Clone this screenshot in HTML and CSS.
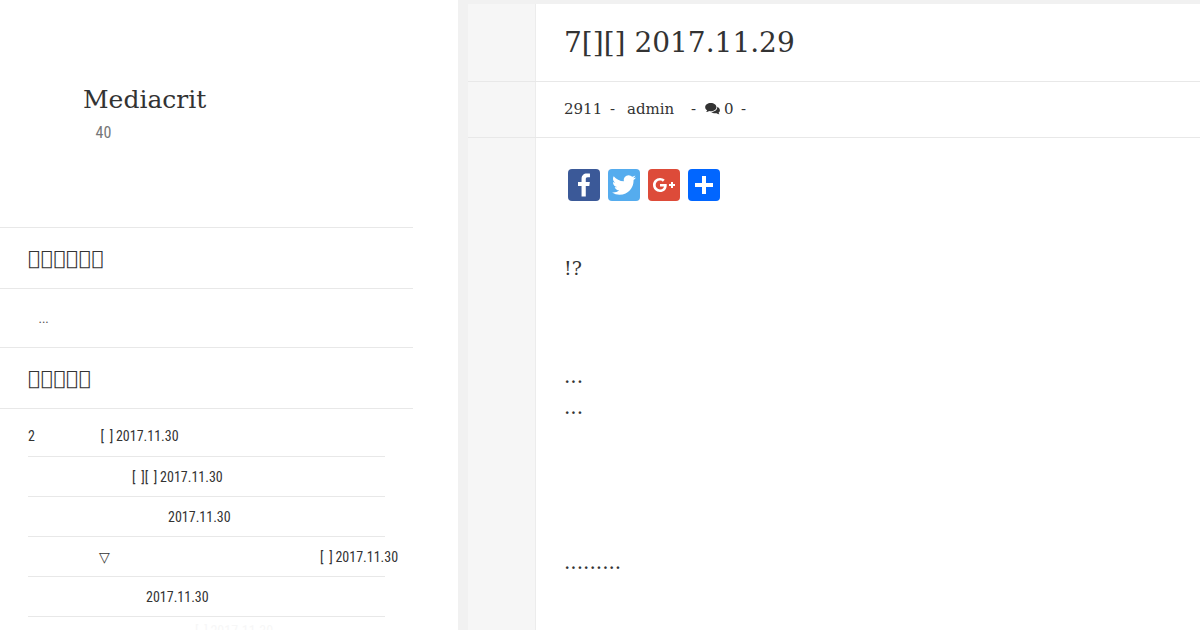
FILE: index.html
```html
<!DOCTYPE html>
<html lang="en">
<head>
  <meta charset="UTF-8">
  <meta name="viewport" content="width=device-width, initial-scale=1">
  <title>Mediacrit</title>
  <link rel="stylesheet" href="styles.css">
</head>
<body>
  <div class="page">
    <!-- Sidebar -->
    <aside class="sidebar">
      <header class="site-header">
        <h1 class="site-title">Mediacrit</h1>
        <p class="site-description"><span class="cond">40</span></p>
      </header>
      <h2 class="widget-title">&#xE800;&#xE800;&#xE800;&#xE800;&#xE800;&#xE800;</h2>
      <div class="widget-text"><span class="cond">...</span></div>
      <h2 class="widget-title">&#xE800;&#xE800;&#xE800;&#xE800;&#xE800;</h2>
      <ul class="recent-posts">
        <li class="post-1"><span class="cond lead">2</span><span class="cond">[&nbsp; ] 2017.11.30</span></li>
        <li class="post-2"><span class="cond">[&nbsp; ][&nbsp; ] 2017.11.30</span></li>
        <li class="post-3"><span class="cond">2017.11.30</span></li>
        <li class="post-4"><span class="triangle">▽</span><span class="cond">[&nbsp; ] 2017.11.30</span></li>
        <li class="post-5"><span class="cond">2017.11.30</span></li>
        <li class="post-6"><span class="cond">[&nbsp; ] 2017.11.30</span></li>
      </ul>
    </aside>

    <!-- Article -->
    <main class="content">
      <div class="row title-row">
        <div class="gutter"></div>
        <h2 class="entry-title">7[][] 2017.11.29</h2>
      </div>
      <div class="row meta-row">
        <div class="gutter"></div>
        <div class="entry-meta">
          <span class="date">2911</span>
          <span class="dash">-</span>
          <span class="author">admin</span>
          <span class="dash">-</span>
          <svg class="comments" width="16" height="14" viewBox="0 0 16 14">
            <path d="M6.2 0.6C2.8 0.6 0.2 2.5 0.2 5c0 1.4.8 2.6 2.1 3.4-.2.8-.7 1.3-1.2 1.8 1.300 0 2.500-.4 3.400-1.100.500.1 1.100.2 1.700.2 3.400 0 6-1.900 6-4.300S9.600.6 6.200.6z"/>
            <path d="M13.100 4.500c.3 3.100-2.600 5.500-6.500 5.700 1 .9 2.500 1.400 4.200 1.400.5 0 1 0 1.500-.1.900.7 2 1.100 3.200 1.100-.5-.5-.9-1-1.100-1.700 1-.7 1.500-1.600 1.500-2.700 0-1.500-1.100-2.900-2.800-3.700z"/>
          </svg>
          <span class="count">0</span>
          <span class="dash">-</span>
        </div>
      </div>
      <div class="row body-row">
        <div class="gutter"></div>
        <div class="entry-content">
          <div class="share">
            <svg class="facebook" viewBox="0 0 32 32"><path fill="#fff" d="M17.780 27.500V17.008h3.522l.527-4.090h-4.050v-2.610c0-1.182.330-1.990 2.023-1.990h2.166V4.660c-.375-.050-1.660-.160-3.155-.160-3.123 0-5.260 1.905-5.260 5.405v3.016h-3.530v4.090h3.530V27.500h4.223z"/></svg>
            <svg class="twitter" viewBox="0 0 32 32"><path fill="#fff" d="M28 8.557a9.913 9.913 0 0 1-2.828.775 4.930 4.930 0 0 0 2.166-2.725 9.738 9.738 0 0 1-3.130 1.194 4.920 4.920 0 0 0-3.593-1.550 4.924 4.924 0 0 0-4.794 6.049c-4.090-.210-7.720-2.170-10.150-5.150a4.942 4.942 0 0 0-.665 2.477c0 1.710.870 3.214 2.190 4.100a4.968 4.968 0 0 1-2.230-.616v.060c0 2.390 1.700 4.380 3.952 4.830-.414.115-.850.174-1.297.174-.318 0-.626-.030-.928-.086a4.935 4.935 0 0 0 4.600 3.420 9.893 9.893 0 0 1-6.114 2.107c-.398 0-.790-.023-1.175-.068a13.953 13.953 0 0 0 7.550 2.213c9.056 0 14.010-7.507 14.010-14.013 0-.213-.005-.426-.015-.637.960-.695 1.795-1.560 2.455-2.550z"/></svg>
            <svg class="gplus" viewBox="0 0 32 32"><path fill="#fff" d="M27 15h-2v-2h-2v2h-2v2h2v2h2v-2h2m-15-2v2.400h3.970c-.160 1.030-1.200 3.020-3.970 3.020-2.390 0-4.340-1.980-4.340-4.420s1.950-4.420 4.340-4.420c1.360 0 2.270.580 2.790 1.080l1.900-1.830C15.470 9.690 13.890 9 12 9c-3.870 0-7 3.130-7 7s3.130 7 7 7c4.040 0 6.720-2.840 6.720-6.840 0-.460-.050-.810-.110-1.160H12z"/></svg>
            <svg class="more" viewBox="0 0 32 32"><path fill="#fff" d="M14 7h4v18h-4z"/><path fill="#fff" d="M7 14h18v4H7z"/></svg>
          </div>
          <p class="question">!?</p>
          <p class="dots">...<br>...</p>
          <p class="ending">.........</p>
        </div>
      </div>
    </main>
  </div>
</body>
</html>
```
FILE: styles.css
```css
* {
  box-sizing: border-box;
}

body {
  margin: 0;
  background-color: #f1f1f1;
  color: #333;
  font-family: "DejaVu Serif", serif;
}

h1, h2, p, ul {
  margin: 0;
  padding: 0;
  font-weight: 400;
}

.page {
  display: flex;
  height: 630px;
  overflow: hidden;
}

/* Sidebar */
.sidebar {
  width: 458px;
  margin-right: 10px;
  padding-right: 45px;
  background-color: #fff;
}

.cond {
  font-family: "Roboto Condensed", Roboto, sans-serif;
  font-stretch: 75%;
  white-space: pre;
}

.site-header {
  height: 227px;
  padding: 84px 0 0 83px;
}

.site-title {
  font-size: 25px;
  line-height: 32px;
}

.site-description {
  padding: 7px 0 0 12.5px;
  color: #777;
  font-size: 16px;
  line-height: 20px;
}

.widget-title {
  height: 62px;
  padding-left: 28px;
  border-top: 1px solid #e8e8e8;
  border-bottom: 1px solid #e8e8e8;
  font-family: "DejaVu Sans", sans-serif;
  font-size: 20px;
  letter-spacing: 0.7px;
  line-height: 60px;
}

.widget-text {
  height: 58px;
  padding-left: 38.5px;
  color: #555;
  font-size: 13px;
  line-height: 60px;
}

.recent-posts {
  margin: 8px 0 0 28px;
  list-style: none;
  font-size: 14px;
}

.recent-posts li {
  display: flex;
  width: 357px;
  height: 40px;
  border-bottom: 1px solid #e8e8e8;
  line-height: 40px;
  white-space: nowrap;
}

.recent-posts .cond {
  flex-shrink: 0;
  word-spacing: -0.4px;
}

.recent-posts .post-1 {
  line-height: 38px;
}

.recent-posts .lead {
  width: 72.5px;
}

.post-2 {
  padding-left: 104px;
}

.post-3 {
  padding-left: 140px;
}

.post-4 {
  padding-left: 71px;
}

.triangle {
  flex-shrink: 0;
  width: 221px;
}

.post-5 {
  padding-left: 118px;
}

.recent-posts .post-6 {
  padding-left: 167px;
  color: #f7f7f7;
  line-height: 28px;
}

/* Article */
.content {
  flex: 1;
  display: flex;
  flex-direction: column;
  padding-top: 4px;
}

.row {
  display: flex;
  background-color: #fff;
  border-bottom: 1px solid #e8e8e8;
}

.gutter {
  width: 68px;
  background-color: #f6f6f6;
  border-right: 1px solid #ececec;
}

.title-row {
  height: 78px;
}

.entry-title {
  padding-left: 28px;
  font-size: 28px;
  line-height: 78px;
}

.meta-row {
  height: 56px;
}

.entry-meta {
  display: flex;
  padding-left: 28px;
  font-size: 15px;
  line-height: 54px;
}

.date {
  width: 46px;
}

.dash {
  width: 17px;
}

.author {
  width: 64px;
}

.entry-meta .author + .dash {
  width: 14px;
}

.comments {
  width: 15px;
  height: 14px;
  margin-top: 20px;
  fill: #333;
}

.count {
  width: 18px;
  padding-left: 4px;
  margin-right: 3px;
}

.body-row {
  flex: 1;
  border-bottom: 0;
}

.entry-content {
  padding: 31px 28px 0;
  font-size: 20px;
  line-height: 31px;
}

.share {
  display: flex;
  gap: 8px;
  padding-left: 4px;
}

.share svg {
  width: 32px;
  height: 32px;
  border-radius: 4px;
}

.facebook {
  background-color: #3b5998;
}

.twitter {
  background-color: #55acee;
}

.gplus {
  background-color: #dd4b39;
}

.more {
  background-color: #0166ff;
}

.question {
  margin-top: 52px;
  font-size: 19px;
}

.dots {
  margin-top: 77px;
}

.ending {
  margin-top: 124px;
}
```
